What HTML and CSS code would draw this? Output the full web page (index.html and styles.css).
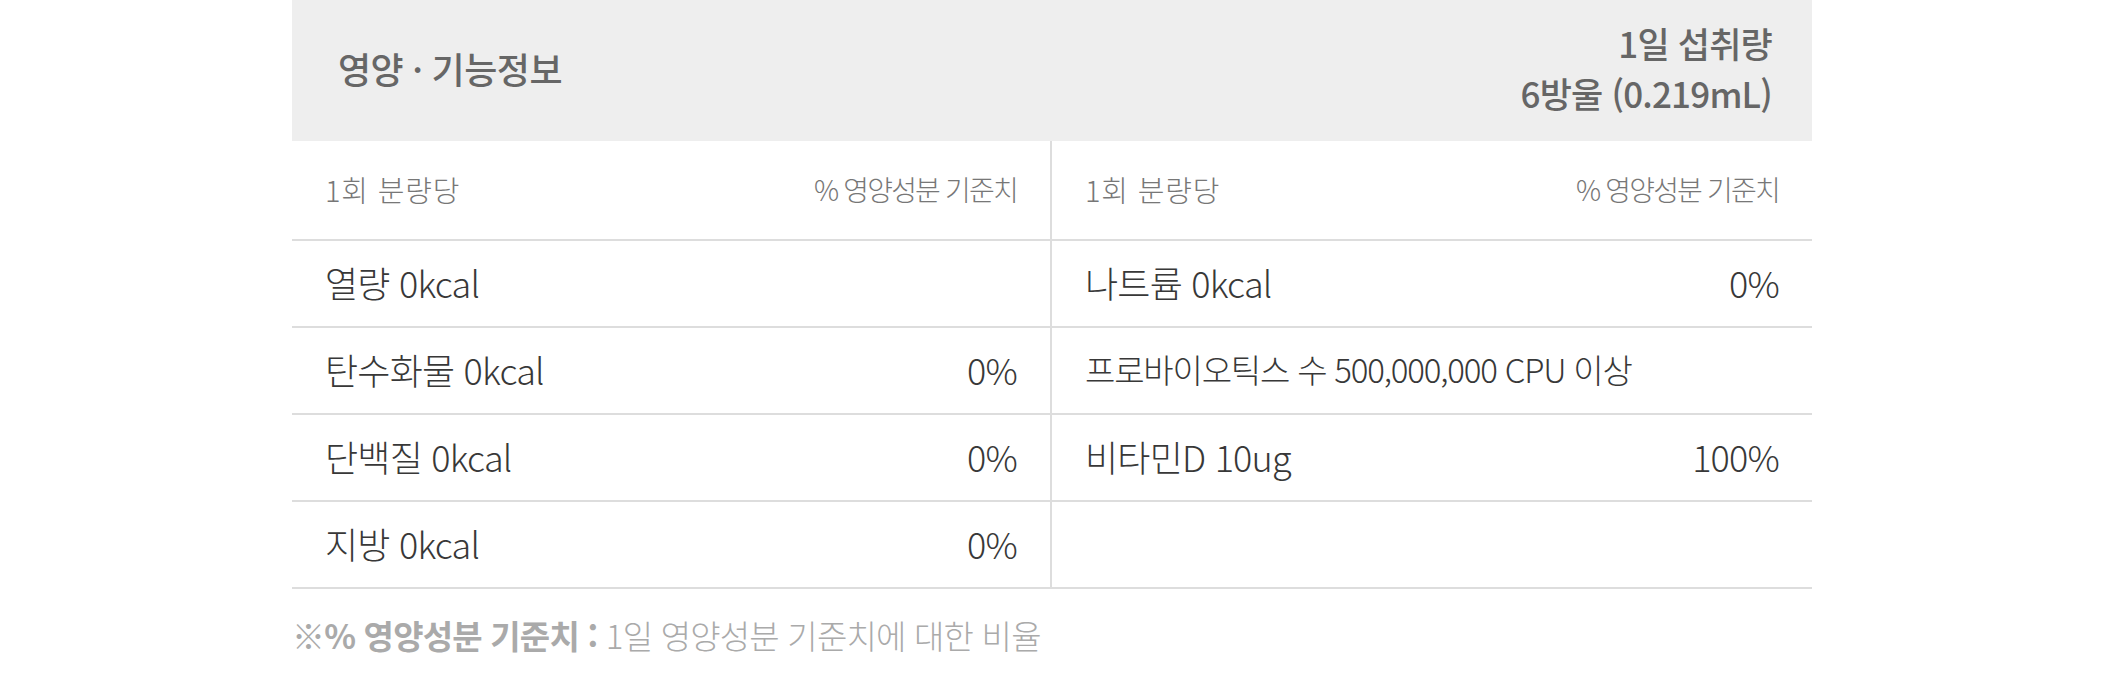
FILE: index.html
```html
<!DOCTYPE html>
<html lang="ko">
<head>
<meta charset="utf-8">
<link rel="stylesheet" href="styles.css">
</head>
<body>
<div class="wrap">
  <div class="head">
    <div class="title">영양<span class="dot">·</span>기능정보</div>
    <div class="intake">
      <div>1일 섭취량</div>
      <div>6방울 (0.219mL)</div>
    </div>
  </div>
  <div class="grid">
    <div class="col col-left">
      <div class="row sub"><span class="lbl">1회 분량당</span><span class="std">% 영양성분 기준치</span></div>
      <div class="row"><span>열량 0kcal</span><span></span></div>
      <div class="row"><span>탄수화물 0kcal</span><span>0%</span></div>
      <div class="row"><span>단백질 0kcal</span><span>0%</span></div>
      <div class="row"><span>지방 0kcal</span><span>0%</span></div>
    </div>
    <div class="col">
      <div class="row sub"><span class="lbl">1회 분량당</span><span class="std">% 영양성분 기준치</span></div>
      <div class="row"><span>나트륨 0kcal</span><span>0%</span></div>
      <div class="row"><span class="long">프로바이오틱스 수 500,000,000 CPU 이상</span><span></span></div>
      <div class="row"><span>비타민D 10ug</span><span>100%</span></div>
      <div class="row"><span></span><span></span></div>
    </div>
  </div>
  <p class="note"><strong>※% 영양성분 기준치 :</strong> 1일 영양성분 기준치에 대한 비율</p>
</div>
</body>
</html>
```
FILE: styles.css
```css
* { box-sizing: border-box; }
html, body { margin: 0; padding: 0; background: #fff; }
body {
  font-family: "Noto Sans CJK KR", sans-serif;
  color: #333;
}
.wrap {
  width: 1520px;
  margin: 0 auto;
}
.head {
  height: 141px;
  background: #eeeeee;
  display: flex;
  justify-content: space-between;
  align-items: center;
  padding: 0 40px 6px 46px;
  color: #666;
}
.title {
  font-size: 36px;
  font-weight: 500;
  letter-spacing: -0.5px;
}
.dot { padding: 0 9px; }
.intake {
  text-align: right;
  font-size: 35px;
  font-weight: 500;
  line-height: 50px;
  letter-spacing: -0.8px;
}
.grid {
  display: grid;
  grid-template-columns: 760px 760px;
  border-bottom: 2px solid #dddddd;
}
.col-left {
  border-right: 2px solid #dddddd;
}
.row {
  display: flex;
  justify-content: space-between;
  align-items: center;
  height: 87px;
  padding: 0 33px 3px;
  border-bottom: 2px solid #dddddd;
  font-size: 36px;
  font-weight: 300;
  letter-spacing: -0.8px;
  color: #383838;
}
.row:last-child { border-bottom: none; height: 85px; }
.long {
  font-size: 33px;
  letter-spacing: -1.2px;
}
.row.sub {
  height: 100px;
  font-size: 28px;
  color: #777;
  letter-spacing: 0;
}
.sub .lbl { font-size: 29px; letter-spacing: 0.8px; }
.sub .std { letter-spacing: -1.8px; }
.note {
  margin: 22px 0 0 0;
  font-size: 33px;
  font-weight: 300;
  color: #aaaaaa;
  letter-spacing: -0.8px;
}
.note strong { font-weight: 700; }
```
